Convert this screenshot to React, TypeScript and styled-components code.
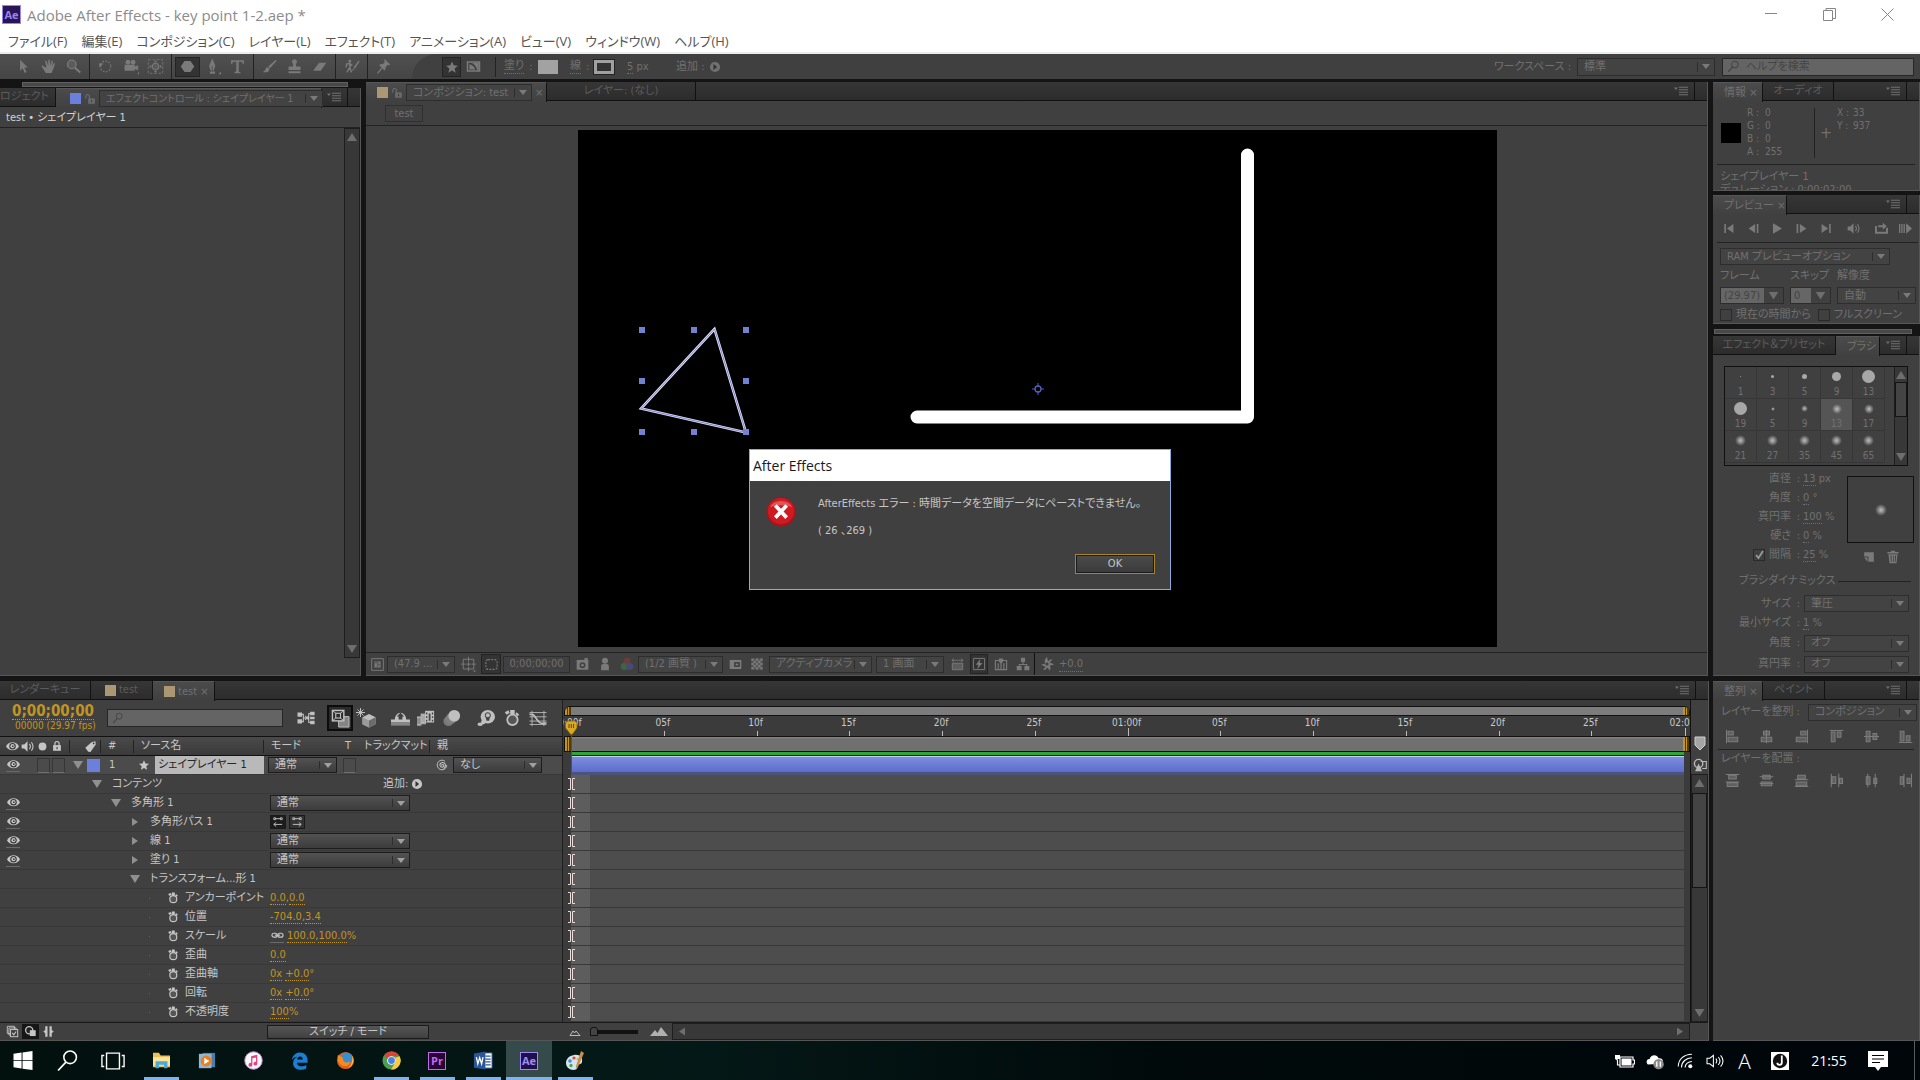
import React from "react";
import styled, { createGlobalStyle, css } from "styled-components";

const c = {
  gap: "#141414",
  panel: "#404040",
  strip: "#313131",
  edge: "#565656",
  line: "#222222",
  dim: "#707070",
  dimIcon: "#7a7a7a",
  text: "#c6c6c6",
  amber: "#c29422",
  blue: "#6b80dc",
  tan: "#ab9873",
};

const Global = createGlobalStyle`
  *, *::before, *::after { box-sizing: border-box; }
  html, body { margin: 0; height: 100%; background: ${c.gap}; }
  body {
    font-family: "DejaVu Sans Condensed", "Noto Sans CJK JP", sans-serif;
    font-feature-settings: "palt";
    font-size: 11px;
    line-height: 14px;
    color: ${c.dim};
    white-space: nowrap;
    overflow: hidden;
  }
  button, input, select {
    font: inherit;
    font-feature-settings: inherit;
    color: inherit;
    margin: 0;
    padding: 0;
    border: 0;
    border-radius: 0;
    background: none;
    appearance: none;
    outline: none;
  }
  svg { display: block; flex: none; }
`;

/* ---------- icons ---------- */

type IconProps = { w?: number; h?: number; box?: string; children: React.ReactNode };
const Svg = ({ w = 20, h = w, box = "0 0 20 20", children }: IconProps) => (
  <svg width={w} height={h} viewBox={box} fill="currentColor" stroke="none" aria-hidden="true">
    {children}
  </svg>
);
const ln = (d: string, width = 1.4) => (
  <path d={d} fill="none" stroke="currentColor" strokeWidth={width} />
);

const icons: Record<string, React.ReactNode> = {
  arrow: <path d="M6 2v13l3-3 2.500 5.500 2-1-2.500-5.300h4z" />,
  hand: <path d="M5.500 11 3 8.500 1.800 9.600l5 7.900h6.800l2.600-6 1.600-5-1.400-.5-2 4 .8-6.500L13.700 3l-1.500 6L11.500 2h-1.700l-.2 7-2-6-1.500.5L7.500 11z" />,
  zoom: (
    <>
      <circle cx="8" cy="7.500" r="5" fillOpacity=".35" stroke="currentColor" strokeWidth="1.500" />
      {ln("M11.500 11.500 18 17", 2.400)}
    </>
  ),
  rotate: (
    <>
      <circle cx="10" cy="10" r="6.300" fill="none" stroke="currentColor" strokeWidth="1.300" strokeDasharray="1.800 1.800" />
      <path d="M2 6.500h5.500L3.500 11z" />
    </>
  ),
  camera: (
    <>
      <circle cx="7" cy="5" r="2.800" />
      <circle cx="13" cy="5" r="2.800" />
      <path d="M3 8h12v7H3zM15 10l4-1.500v6L15 13zM18 19l2-3v3z" />
    </>
  ),
  panbehind: (
    <>
      <rect x="1.500" y="2" width="17" height="16" fill="none" stroke="currentColor" strokeDasharray="3 2" />
      <circle cx="10" cy="10" r="3.800" fillOpacity=".35" stroke="currentColor" strokeWidth="1.300" />
      <path d="M10 2.500 8 5h4zM10 17.500l-2-2.500h4zM2.500 10 5 8v4zM17.500 10 15 8v4z" />
    </>
  ),
  hexagon: <path d="M6.500 3.500h7l4.500 6.500-4.500 6.500h-7L2 10z" />,
  pen: <path d="M9.500 1 6 9.500 8 15h1.200V9h.9v6h1.200l2-5.500L10 1zM7 16h6v2.500H7zM17 19l3-3v3z" />,
  type: <path d="M2.500 2.500h15V7h-1.200c-.4-2-1-2.700-3-2.700H11.400V15.300c0 1 .6 1.300 2.200 1.500V18H6.400v-1.200c1.600-.2 2.200-.5 2.200-1.500V4.300H6.700c-2 0-2.600.7-3 2.700H2.500z" />,
  brush: <path d="M17.500 2 8.500 10l2 2L18.500 3.200zM8 10.800c-2 0-2.500 1.500-3 3-.4 1.200-1.500 2-3 2.700 3.500 1 7.500.2 8-3.700z" />,
  stamp: <path d="M10 1.500a3 3 0 0 1 1.600 5.500L11.800 10H17v4H3v-4h5.200L8.400 7A3 3 0 0 1 10 1.500zM3 15.500h14V18H3z" />,
  eraser: <path d="M9.500 5.500h8.500L11.500 15H2.500zM6.500 10.500h8l-3 4.500H3.500z" />,
  roto: (
    <>
      <circle cx="8" cy="3.500" r="1.800" />
      {ln("M8 5v6l-3.500 6M8 11l2 6M3.500 11l1-4 3.500-.5 3 2.500", 1.700)}
      <path d="m18.500 3-6 8 1.500 1.500L19.500 4zM12 12l-1.500 3.500 3-2z" />
    </>
  ),
  pin: (
    <>
      <path d="m11.500 1.500 6.500 6-1.500 1-1.500-.7-2.600 3c.2 1.700-.2 3-1.400 4L5 8.500c1-1.200 2.400-1.500 4-1.200l2.800-3L10.500 3z" />
      {ln("M8 12 3 18", 1.500)}
    </>
  ),
  star: <path d="m10 2 2.400 5.600 6 .5-4.600 4 1.400 6L10 14.900l-5.200 3.200 1.400-6-4.600-4 6-.5z" />,
  mask: (
    <>
      <path d="M1 3h18v14H1zm2 2v10h14V5z" fillRule="evenodd" />
      <path d="M7 5h10v10h-2C14 10 11 6 7 5zM4.500 7c4 1 7 4 8 7h-8z" />
    </>
  ),
  play: (
    <>
      <circle cx="10" cy="10" r="8.500" />
      <path d="M7.500 5v10l6-5z" fill="#333" />
    </>
  ),
  lock: (
    <>
      <path d="M7 9h11v9H7z" fillOpacity=".9" />
      {ln("M9 9V5.500a3 3 0 0 0-6 0V9", 1.700)}
      <path d="M12 11.500h1.500v4H12z" fill="#333" />
    </>
  ),
  locked: (
    <>
      <path d="M3.500 8.500h13V18h-13z" />
      {ln("M6.500 9V6a3.500 3.500 0 0 1 7 0v3", 2)}
      <path d="M9.200 11.500h1.700v4H9.200z" fill="#333" />
    </>
  ),
  menu: <path d="M0 5h5.500L2.700 8.500zM7 4h13v1.500H7zM7 7.500h13V9H7zM7 11h13v1.500H7zM7 14.500h13V16H7z" />,
  eye: (
    <>
      <path d="M0 10C4 1.500 16 1.500 20 10 16 17.500 4 17.500 0 10z" />
      <circle cx="10" cy="9.500" r="5" fill="#3a3a3a" />
      <circle cx="10" cy="9.500" r="3.200" />
      <circle cx="10.500" cy="9.500" r="1.300" fill="#3a3a3a" />
    </>
  ),
  speaker: (
    <>
      <path d="M1 7h4l5-5v16l-5-5H1z" />
      {ln("M13 6q3 4 0 8M16 3.500q5 6.500 0 13", 1.700)}
    </>
  ),
  dot: <circle cx="10" cy="10" r="6" />,
  tag: (
    <>
      <path d="M2 12 11.500 3.500l6-1.500.5 5-8 11.500-3.500-.5z" />
      <circle cx="14.800" cy="5.200" r="1.300" fill="#333" />
    </>
  ),
  swirl: (
    <>
      <circle cx="10" cy="10" r="8" fill="none" stroke="currentColor" strokeWidth="1.500" strokeDasharray="42 9" />
      {ln("M10 11c-1.500-2 2-3 3 0 .5 3-6 4-6.500-.5C6.500 5 14 4 15.500 9c1 4-1 6-3 7", 1.700)}
    </>
  ),
  watch: (
    <>
      <circle cx="10.500" cy="12" r="5.800" fill="#555" stroke="currentColor" strokeWidth="2" />
      <path d="M8 1h5v4.500H8zM2 3.500 6 1.500 7.500 4.500 4 6.500zM15 3.500l3 2.500-1.500 2-2.800-2.500z" />
    </>
  ),
  link: (
    <>
      <rect x="1.500" y="6.500" width="8" height="6" rx="3" fill="none" stroke="currentColor" strokeWidth="1.800" />
      <rect x="10.500" y="6.500" width="8" height="6" rx="3" fill="none" stroke="currentColor" strokeWidth="1.800" />
      {ln("M6 9.500h8", 1.800)}
    </>
  ),
  dirLeft: ln("M3 3h3v3H3zM14 3h3v3h-3zM6 4.500h8M3 14h14M7 10.500 3 14l4 3.500", 1.600),
  dirRight: ln("M3 3h3v3H3zM14 3h3v3h-3zM6 4.500h8M3 14h14M13 10.500l4 3.500-4 3.500", 1.600),
  flow: (
    <>
      <path d="M0 4h5v4.500H0zM0 11.500h5V16H0zM14 3h5v4h-5zM14 8.500h5v3h-5zM14 13h5v4h-5z" />
      <path d="M8.500 7.500 12.500 12M12.500 7.500 8.500 12M5 6h1.500v8H5M14 5h-1.500v10H14M6.500 10h6" fill="none" stroke="currentColor" strokeWidth="1.200" />
    </>
  ),
  comp: (
    <>
      <path d="M8 8h11v11H8z" fillOpacity=".6" stroke="currentColor" />
      <rect x="1.500" y="1.500" width="12" height="11" fill="#2b2b2b" stroke="currentColor" strokeWidth="1.500" />
      <rect x="5" y="4.500" width="5" height="5" fill="none" stroke="currentColor" strokeWidth="1.200" />
      {ln("M2 2l3 2.500M13 2l-3 2.500M2 12l3-2.500M13 12l-3-2.500", 1)}
    </>
  ),
  cube: (
    <>
      {ln("M4.500 0v9M0 4.500h9M1.500 1.500l6 6M7.500 1.500l-6 6", 1)}
      <path d="m13 6 6.500 3.200v7L13 19.500 6.500 16.200v-7z" />
      <path d="m13 12.500 6.500-3.300v7L13 19.500z" fill="#6c6c6c" />
      <path d="m6.500 9.200 6.500 3.300v7l-6.500-3.300z" fill="#9a9a9a" />
    </>
  ),
  shy: (
    <>
      <path d="M4 11a6 7 0 0 1 12 0h-4V8h2l-4-4-4 4h2v3zM0 11h20v3H0z" />
      <path d="M0 14h20v3.500H0z" fillOpacity=".55" />
    </>
  ),
  film: (
    <>
      <path d="M0 8h5v11H0z" fillOpacity=".6" />
      <path d="M4 5h6v12H4z" fillOpacity=".8" />
      <path d="M9 2h10v13H9z" />
      {ln("M0 9.500h4M0 17h4M5 7h3M5 15h3", 1)}
      <path d="M10 4h1.500v2H10zM10 8h1.500v2H10zM10 12h1.500v2H10zM16.500 4H18v2h-1.500zM16.500 8H18v2h-1.500zM16.500 12H18v2h-1.500zM13 5h2v8h-2z" fill="#444" />
    </>
  ),
  blur: (
    <>
      <circle cx="6" cy="13.500" r="5.500" fillOpacity=".45" />
      <circle cx="9" cy="10.500" r="6" fill="#808080" />
      <circle cx="12.500" cy="7.500" r="6.500" />
    </>
  ),
  brain: (
    <>
      <ellipse cx="12" cy="8.500" rx="8" ry="7.500" />
      <ellipse cx="3.500" cy="17" rx="3" ry="2" />
      <circle cx="7" cy="14.500" r="2.500" />
      <path d="M12 3.500a3.600 3.600 0 0 1 2.200 6.300L13.500 13h-3L9.800 9.800A3.600 3.600 0 0 1 12 3.500z" fill="#444" />
      <circle cx="12" cy="7" r="2.200" />
    </>
  ),
  graph: (
    <>
      {ln("M0 3h20M0 8h20M0 13h20M0 17h20M3 1v18M17 1v18", 1)}
      {ln("M0 5c4 0 5 0 8 5s5 7 12 5", 1.800)}
    </>
  ),
  collapse: (
    <>
      {ln("M2 2h11v11H2zM4.500 4.500h11v11h-11z", 1.400)}
      <rect x="7" y="7" width="11" height="11" fill="#404040" stroke="currentColor" strokeWidth="1.500" />
      {ln("M9.500 12l2.500 3 3.500-5", 1.700)}
    </>
  ),
  circles: (
    <>
      <path d="M9 8h9v9H9z" />
      <circle cx="8" cy="8" r="5.500" fill="#222" stroke="currentColor" strokeWidth="2" />
      <path d="M9 8h5v5H9z" />
    </>
  ),
  braces: <path d="M8.500 2H5v5.500L2 10l3 2.500V18h3.500zM11.500 2H15v5.500l3 2.500-3 2.500V18h-3.500z" />,
  search: (
    <>
      <circle cx="12" cy="7" r="5" fill="none" stroke="currentColor" strokeWidth="1.600" />
      {ln("M8.500 11 2 18", 2)}
    </>
  ),
  first: <path d="M2 3h2.500v14H2zM16 3v14l-10-7z" />,
  prev: <path d="M15 3h2.500v14H15zM12.500 3v14l-10-7z" />,
  go: <path d="M3 2v16l14-8z" />,
  next: <path d="M2.500 3H5v14H2.500zM7.500 3v14l10-7z" />,
  last: <path d="M15.500 3H18v14h-2.500zM4 3v14l10-7z" />,
  loop: <path d="M0 6h3v9h14V9h3v9H0zM5 5h7V1l6 5.500L12 12V8H5z" />,
  ram: <path d="M0 3h2v14H0zM3.500 3h2v14h-2zM7 3h2v14H7zM11 2v16l9-8z" />,
  note: <path d="M2 2h16v16h-9V9H2zM2 11h5.500v7z" />,
  trash: <path d="M7 1h6v2h5v2H2V3h5zM3.500 6h13L15 19H5zm3 2 .5 9h1V8zM10 8v9h1V8zm3 0-.5 9h1L14.500 8z" />,
  grid: (
    <>
      {ln("M1 1h18v18H1z", 1.500)}
      <path d="M4.500 4.500h11v11h-11z" fillOpacity=".45" />
      <path d="M11 6h3v3h-3zM6 8h3v6H6zM11 11h3v3h-3z" />
    </>
  ),
  safe: (
    <>
      {ln("M3 3h14v13H3zM10 0v6M10 13v6M0 9.500h6M14 9.500h6M7 9.500h6M10 7v5", 1.300)}
      <path d="M16 18h4l-2 2.500z" />
    </>
  ),
  roi: <rect x="2.500" y="3.500" width="15" height="13" rx="3" fill="none" stroke="currentColor" strokeWidth="1.500" strokeDasharray="2.500 1.700" />,
  photo: (
    <>
      <path d="M1 3h18v15H1z" />
      <circle cx="10" cy="11" r="4.500" fill="#404040" />
      <circle cx="10" cy="11" r="2" />
      <path d="M13 0h5v3h-5z" />
    </>
  ),
  person: <path d="M10 1a4 4 0 0 1 0 8.500A4 4 0 0 1 10 1zM4.500 19v-6q0-3 3-3h5q3 0 3 3v6z" />,
  rgb: (
    <>
      <circle cx="10" cy="6" r="5" fill="#6e3b3d" />
      <circle cx="6" cy="13.500" r="5" fill="#3c6543" />
      <circle cx="14" cy="13.500" r="5" fill="#454a78" />
    </>
  ),
  res: (
    <>
      <path d="M1 3h18v14H1z" />
      <path d="M8 6.500h8.500v7H8z" fill="#333" />
      <path d="M10 8.500h4.500v3H10z" />
    </>
  ),
  checker: (
    <>
      <path d="M2 2h16v16H2z" fillOpacity=".4" />
      <path d="M2 2h3.200v3.200H2zm6.400 0h3.200v3.200H8.400zm6.400 0H18v3.200h-3.200zM5.200 5.200h3.200v3.200H5.200zm6.400 0h3.200v3.200h-3.200zM2 8.400h3.200v3.200H2zm6.400 0h3.200v3.200H8.400zm6.400 0H18v3.200h-3.200zM5.200 11.600h3.200v3.200H5.200zm6.400 0h3.200v3.200h-3.200zM2 14.800h3.200V18H2zm6.400 0h3.200V18H8.400zm6.400 0H18V18h-3.200z" />
    </>
  ),
  ratio: (
    <>
      <path d="M2 8h16v10H2z" fillOpacity=".5" stroke="currentColor" strokeWidth="1.500" />
      {ln("M1 3.500h18M4.500 1 1.500 3.500l3 2.500M15.500 1l3 2.500-3 2.500", 1.300)}
    </>
  ),
  bolt: (
    <>
      {ln("M2 2h16v16H2z", 1.400)}
      <path d="M12 2.500 5.500 11H9l-1.500 6.500L15 8.500h-4z" />
    </>
  ),
  tline: (
    <>
      {ln("M2 5h16v13H2zM6 9v9M10 9v9M14 9v9", 1.600)}
      <path d="M7 2h6v4l-3 4-3-4z" />
    </>
  ),
  tree: <path d="M7 1h6v6H7zM1 13h7v6H1zM12 13h7v6h-7zM9.300 7h1.400v3H16v3h-1.400v-1.700H5.400V13H4v-3h5.300z" />,
  aperture: (
    <>
      <path d="M10 0c1 3 0 4 2 6 2-3 4-3 6-2-3 1-3 3-4 5 3-1 5 1 6 3-3-1-4 0-6 1 2 2 1 5-1 7 0-3-1-4-3-5-1 3-3 4-6 3 3-1 3-3 4-5-3 1-5-1-6-3 3 1 4 0 6-1-2-2-2-5 2-9z" />
      <circle cx="10" cy="10" r="2.300" fill="#404040" />
    </>
  ),
  layers: (
    <>
      <circle cx="8" cy="8" r="6" fill="none" stroke="currentColor" strokeWidth="2" />
      {ln("M11 5h8v10h-6", 1.600)}
      <path d="m8 8 5 11H3z" />
    </>
  ),
};
const Icon = ({ name, size = 20, h }: { name: string; size?: number; h?: number }) => (
  <Svg w={size} h={h ?? size}>{icons[name]}</Svg>
);

/* ---------- shared parts ---------- */

const Grip = styled.span`
  flex: none;
  width: 4px;
  height: 14px;
  background-image: radial-gradient(circle, #5c5c5c 40%, transparent 50%);
  background-size: 2px 2px;
`;

const Panel = styled.section`
  display: flex;
  flex-direction: column;
  min-width: 0;
  min-height: 0;
  background: ${c.panel};
  border-right: 1px solid ${c.edge};
  border-bottom: 1px solid ${c.edge};
  overflow: hidden;
`;

const TabStrip = styled.div`
  display: flex;
  flex: none;
  height: 19px;
  background: linear-gradient(#363636, #2c2c2c);
  border-bottom: 1px solid #111;
`;

const Tab = styled.div<{ $active?: boolean; $w?: number }>`
  display: flex;
  flex: none;
  align-items: center;
  justify-content: ${(p) => (p.$active ? "flex-start" : "center")};
  gap: 3px;
  width: ${(p) => (p.$w ? `${p.$w}px` : "auto")};
  padding: ${(p) => (p.$active ? "0 0 0 4px" : "0")};
  color: ${(p) => (p.$active ? c.dim : "#5c5c5c")};
  border-right: 1px solid #111;
  ${(p) =>
    p.$active &&
    css`
      height: 20px;
      background: linear-gradient(#4b4b4b, ${c.panel});
      border-top: 1px solid ${c.edge};
    `}
`;

const ClippedTab = styled(Tab)`
  justify-content: flex-start;
`;

const StripEnd = styled.div`
  display: flex;
  align-items: center;
  gap: 6px;
  margin-left: auto;
  padding-right: 2px;
  color: ${c.dim};
`;
const StripDivider = styled.span`
  width: 1px;
  height: 100%;
  background: #111;
`;
const PanelMenu = () => (
  <StripEnd>
    <Icon name="menu" size={14} />
    <StripDivider />
    <Grip />
  </StripEnd>
);

const Swatch = styled.span<{ $color: string; $w?: number; $h?: number }>`
  flex: none;
  width: ${(p) => p.$w ?? 11}px;
  height: ${(p) => p.$h ?? 11}px;
  background: ${(p) => p.$color};
`;

const SelectWrap = styled.span<{ $w?: number; $h?: number; $live?: boolean; $small?: boolean }>`
  position: relative;
  display: flex;
  flex: none;
  width: ${(p) => (p.$w ? `${p.$w}px` : "auto")};
  height: ${(p) => p.$h ?? 17}px;
  border: 1px solid ${(p) => (p.$live ? "#1c1c1c" : "#2d2d2d")};
  background: ${(p) => (p.$live ? "linear-gradient(#525252, #3c3c3c)" : "#434343")};
  color: ${(p) => (p.$live ? c.text : c.dim)};
  font-size: ${(p) => (p.$small ? 10 : 11)}px;
  &::before {
    content: "";
    position: absolute;
    top: 3px;
    bottom: 3px;
    right: 16px;
    width: 1px;
    background: #2d2d2d;
  }
  &::after {
    content: "";
    position: absolute;
    top: 5px;
    right: 4px;
    border: 4px solid transparent;
    border-top: 5px solid ${(p) => (p.$live ? "#a0a0a0" : "#7a7a7a")};
    border-bottom: 0;
  }
  select {
    flex: 1;
    min-width: 0;
    padding: 0 17px 0 6px;
  }
`;
type SelectProps = { label: string; value: string; w?: number; h?: number; live?: boolean; small?: boolean };
const Select = ({ label, value, w, h, live, small }: SelectProps) => (
  <SelectWrap $w={w} $h={h} $live={live} $small={small}>
    <select aria-label={label} defaultValue={value}>
      <option>{value}</option>
    </select>
  </SelectWrap>
);

const IconButton = styled.button<{ $w?: number; $pressed?: boolean }>`
  display: flex;
  flex: none;
  align-items: center;
  justify-content: center;
  width: ${(p) => p.$w ?? 22}px;
  color: ${c.dimIcon};
  ${(p) =>
    p.$pressed &&
    css`
      align-self: center;
      height: 20px;
      background: #333;
      border: 1px solid #242424;
    `}
`;

const Rule = styled.div`
  flex: none;
  height: 1px;
  background: ${c.line};
`;

const Dotted = styled.span`
  border-bottom: 1px dotted currentColor;
`;

/* ---------- title and menus ---------- */

const Page = styled.div`
  display: flex;
  flex-direction: column;
  height: 100vh;
`;

const TitleBar = styled.header`
  display: flex;
  flex: none;
  align-items: center;
  gap: 6px;
  height: 29px;
  padding: 0 4px 0 2px;
  background: #fff;
  color: #8c8c8c;
  font: 15px/20px "Open Sans", "Noto Sans", sans-serif;
`;
const AppBadge = styled.span<{ $size: number; $color: string; $bg: string }>`
  display: flex;
  align-items: center;
  justify-content: center;
  width: ${(p) => p.$size}px;
  height: ${(p) => p.$size}px;
  background: ${(p) => p.$bg};
  border: 1px solid ${(p) => p.$color};
  color: ${(p) => p.$color};
  font: bold 11px/12px "Open Sans", sans-serif;
`;
const WindowButtons = styled.div`
  display: flex;
  margin-left: auto;
  color: #868686;
`;
const WindowButton = styled.button`
  display: flex;
  justify-content: center;
  width: 58px;
`;
const MenuBar = styled.nav`
  display: flex;
  flex: none;
  align-items: center;
  gap: 14px;
  height: 25px;
  padding: 0 8px;
  background: #fff;
  border-bottom: 2px solid #ececec;
  color: #555;
  font: 13px/20px "Open Sans", "Noto Sans CJK JP", sans-serif;
  font-feature-settings: "palt";
`;
const MenuButton = styled.button``;

/* ---------- toolbar ---------- */

const Toolbar = styled.div`
  display: flex;
  flex: none;
  height: 25px;
  background: linear-gradient(#505050, #454545);
  color: ${c.dim};
`;
const ToolGrip = styled.div`
  display: flex;
  align-items: center;
  width: 8px;
  padding-left: 4px;
`;
const ToolGroup = styled.div<{ $last?: boolean }>`
  display: flex;
  padding: 0 3px;
  border-right: 1px solid ${(p) => (p.$last ? "transparent" : "#222")};
`;
const ToolOptions = styled.div`
  display: flex;
  flex: 1;
  align-items: center;
  margin-left: 12px;
  padding: 0 6px 0 30px;
  border-top-left-radius: 24px 25px;
  background: ${c.panel};
`;
const ToolDivider = styled.span`
  width: 1px;
  height: 20px;
  margin: 0 8px 0 10px;
  background: #222;
`;
const Option = styled.span<{ $w: number }>`
  display: flex;
  flex: none;
  align-items: center;
  gap: 5px;
  width: ${(p) => p.$w}px;
`;
const StrokeSwatch = styled.span`
  width: 20px;
  height: 14px;
  border: 3px solid #a0a0a0;
  outline: 1px solid #222;
  background: #333;
`;
const Workspace = styled.label`
  display: flex;
  align-items: center;
  gap: 6px;
  margin-left: auto;
  margin-right: 7px;
`;
const SearchBox = styled.label<{ $w: number; $h: number }>`
  display: flex;
  flex: none;
  align-items: center;
  gap: 6px;
  width: ${(p) => p.$w}px;
  height: ${(p) => p.$h}px;
  padding-left: 4px;
  background: #646464;
  border: 1px solid #262626;
  color: #454545;
  input {
    flex: 1;
    min-width: 0;
  }
  input::placeholder {
    color: #454545;
    opacity: 1;
  }
`;

/* ---------- upper workspace ---------- */

const Upper = styled.main`
  display: grid;
  flex: 1;
  grid-template-columns: 361px minmax(0, 1fr) 207px;
  column-gap: 5px;
  min-height: 0;
  padding: 3px 0 5px;
`;
const Column = styled.div`
  display: flex;
  flex-direction: column;
  min-height: 0;
  min-width: 0;
`;
const DockBar = styled.div<{ $left?: boolean }>`
  flex: none;
  height: 5px;
  margin: ${(p) => (p.$left ? "0 13px 1px 22px" : "5px 8px 2px 1px")};
  background: #484848;
  border: 1px solid #606060;
`;
const EffectPanel = styled(Panel)`
  flex: 1;
`;
const EffectTitle = styled.div`
  flex: none;
  height: 21px;
  padding: 4px 6px 3px;
  border-bottom: 1px solid ${c.line};
  color: #d2d2d2;
`;
const EffectBody = styled.div`
  display: flex;
  flex: 1;
  justify-content: flex-end;
  padding-bottom: 17px;
`;
const ScrollTrack = styled.div<{ $w?: number }>`
  display: flex;
  flex: none;
  flex-direction: column;
  align-items: center;
  width: ${(p) => p.$w ?? 16}px;
  padding: 4px 0;
  background: #383838;
  border: 1px solid #1e1e1e;
`;
const Tri = styled.span<{ $dir: "up" | "down" | "left" | "right"; $end?: boolean }>`
  flex: none;
  width: 10px;
  height: 8px;
  margin-top: ${(p) => (p.$end ? "auto" : "0")};
  background: #6e6e6e;
  clip-path: ${(p) =>
    ({
      up: "polygon(50% 0, 100% 100%, 0 100%)",
      down: "polygon(0 0, 100% 0, 50% 100%)",
      left: "polygon(20% 50%, 80% 0, 80% 100%)",
      right: "polygon(20% 0, 80% 50%, 20% 100%)",
    })[p.$dir]};
`;
const Crumbs = styled.div`
  flex: none;
  height: 25px;
  padding: 4px 19px;
  border-bottom: 1px solid ${c.line};
`;
const Crumb = styled.button`
  width: 38px;
  height: 17px;
  border: 1px solid #303030;
`;
const Viewer = styled.div`
  flex: 1;
  min-height: 0;
  padding: 4px 0 5px 2px;
  svg {
    width: 100%;
    height: 100%;
  }
`;
const ViewerBar = styled.div`
  display: flex;
  flex: none;
  align-items: center;
  height: 23px;
  padding-left: 4px;
  gap: 2px;
  border-top: 1px solid ${c.line};
`;
const TimeBox = styled.button`
  width: 67px;
  height: 17px;
  border: 1px solid #2d2d2d;
`;

/* ---------- right column ---------- */

const InfoPanel = styled(Panel)`
  flex: none;
  height: 109px;
  margin-bottom: 4px;
`;
const PreviewPanel = styled(Panel)`
  flex: none;
  height: 129px;
`;
const BrushPanel = styled(Panel)`
  flex: 1;
`;
const InfoGrid = styled.div`
  display: flex;
  flex: none;
  height: 64px;
  padding: 5px 8px;
  margin: 0 4px;
  border-bottom: 1px solid ${c.line};
  font-size: 10px;
  line-height: 13px;
`;
const InfoSwatch = styled(Swatch)`
  align-self: center;
  margin: 0 6px 0 -4px;
`;
const Channels = styled.dl`
  display: grid;
  grid-template-columns: 18px auto;
  align-content: start;
  width: 67px;
  margin: 0;
  dd {
    margin: 0;
  }
`;
const CursorPos = styled(Channels)`
  grid-template-columns: 16px auto;
`;
const Plus = styled.span`
  align-self: center;
  width: 23px;
  padding-left: 5px;
  border-left: 1px solid ${c.line};
  font-size: 16px;
  line-height: 50px;
`;
const InfoNotes = styled.div`
  padding: 5px 7px 0;
  line-height: 13px;
`;
const PlayRow = styled.div`
  display: flex;
  flex: none;
  height: 29px;
  margin: 0 1px 0 4px;
  border-bottom: 1px solid ${c.line};
`;
const PreviewGrid = styled.div`
  display: grid;
  grid-template-columns: 64px 41px 79px;
  column-gap: 6px;
  row-gap: 4px;
  padding: 5px 0 0 7px;
`;
const Wide = styled.div`
  grid-column: 1 / -1;
`;
const Combo = styled.label`
  display: grid;
  grid-template-columns: 1fr 19px;
  align-items: center;
  justify-items: center;
  height: 17px;
  border: 1px solid #2d2d2d;
  input {
    width: 100%;
    height: 15px;
    padding-left: 3px;
    background: #666;
    color: #444;
  }
`;
const CheckRow = styled.div`
  display: flex;
  grid-column: 1 / -1;
  gap: 7px;
`;
const Check = styled.label`
  display: flex;
  align-items: center;
  gap: 4px;
  input {
    width: 12px;
    height: 12px;
    border: 1px solid #2a2a2a;
  }
  input:checked {
    background: url("data:image/svg+xml,%3Csvg xmlns='http://www.w3.org/2000/svg' viewBox='0 0 10 10'%3E%3Cpath d='M2 5l2.500 3L9 1' fill='none' stroke='%23999' stroke-width='1.800'/%3E%3C/svg%3E") center / 10px;
  }
`;
const BrushList = styled.div`
  display: flex;
  flex: none;
  height: 100px;
  margin: 11px 11px 3px;
  border: 1px solid #101010;
`;
const BrushGrid = styled.div`
  display: grid;
  flex: 1;
  grid-template-columns: repeat(5, 32px);
  grid-auto-rows: 32px;
  overflow: hidden;
  font-size: 10px;
  line-height: 12px;
`;
const BrushCell = styled.button<{ $on?: boolean }>`
  display: grid;
  grid-template-rows: 19px 12px;
  justify-items: center;
  align-items: center;
  border-right: 1px solid #373737;
  border-bottom: 1px solid #373737;
  background: ${(p) => (p.$on ? "#555" : "none")};
`;
const BrushDot = styled.span<{ $d: number; $soft?: boolean }>`
  width: ${(p) => p.$d}px;
  height: ${(p) => p.$d}px;
  border-radius: 50%;
  background: ${(p) => (p.$soft ? "radial-gradient(circle, #b0b0b0 10%, transparent 70%)" : "#a8a8a8")};
`;
const BrushThumb = styled.span`
  width: 100%;
  height: 35px;
  margin-top: 3px;
  background: #444;
  border: 1px solid #141414;
`;
const BrushScroll = styled(ScrollTrack)`
  width: 13px;
  border-width: 0 0 0 1px;
`;
const BrushSettings = styled.div`
  display: grid;
  grid-template-columns: 1fr 67px;
  margin: 0 5px 5px 0;
`;
const Fields = styled.div`
  display: grid;
  grid-auto-rows: 19px;
  align-items: center;
`;
const Field = styled.div`
  display: grid;
  grid-template-columns: 78px 9px 1fr;
  align-items: center;
  height: 19px;
  text-align: right;
  > :nth-child(3) {
    text-align: left;
    padding-left: 3px;
  }
  > label {
    justify-content: flex-end;
  }
`;
const SelectField = styled(Field)`
  height: 22px;
  margin-right: 10px;
  > :nth-child(3) {
    margin-left: 4px;
    padding: 0;
  }
`;
const BrushPreview = styled.div`
  display: flex;
  align-items: center;
  justify-content: center;
  height: 67px;
  margin-top: 7px;
  border: 1px solid #101010;
`;
const BrushActions = styled.div`
  display: flex;
  justify-content: center;
  padding-top: 7px;
`;
const SectionLabel = styled.div`
  display: flex;
  flex: none;
  align-items: center;
  gap: 3px;
  height: 24px;
  padding: 0 8px 0 26px;
  &::after {
    content: "";
    flex: 1;
    height: 1px;
    background: ${c.line};
  }
`;
const AlignTop = styled.label`
  display: flex;
  align-items: center;
  justify-content: space-between;
  height: 24px;
  padding: 0 2px 0 8px;
`;
const AlignLabel = styled.div`
  height: 18px;
  padding: 2px 8px;
`;
const AlignRow = styled.div`
  display: flex;
  justify-content: space-between;
  height: 25px;
  padding: 0 2px 0 8px;
`;
const AlignRule = styled(Rule)`
  margin: 0 5px;
`;

/* ---------- timeline ---------- */

const Lower = styled.div`
  display: grid;
  flex: none;
  grid-template-columns: minmax(0, 1fr) 207px;
  column-gap: 4px;
`;
const TimelineBody = styled.div`
  display: grid;
  grid-template-columns: 563px minmax(0, 1fr) 18px;
`;
const Outline = styled.div`
  border-right: 1px solid #1e1e1e;
  color: ${c.text};
`;
const OutlineTop = styled.div`
  display: flex;
  align-items: center;
  height: 37px;
  padding-left: 12px;
  border-bottom: 1px solid #111;
`;
const TimeCode = styled.button`
  width: 95px;
  text-align: left;
  color: ${c.amber};
  font-size: 10px;
  line-height: 12px;
  strong {
    display: inline-block;
    font-size: 15px;
    line-height: 15px;
    border-bottom: 1px dotted ${c.amber};
  }
  span {
    display: block;
    padding-left: 3px;
  }
`;
const SwitchIcons = styled.div`
  display: flex;
  align-items: center;
  padding-left: 10px;
`;
const SwitchButton = styled.button<{ $ml?: boolean; $pressed?: boolean }>`
  display: flex;
  align-items: center;
  justify-content: center;
  width: 26px;
  height: 26px;
  margin-left: ${(p) => (p.$ml ? "8px" : "0")};
  color: #c0c0c0;
  ${(p) => p.$pressed && "background: #2b2b2b; border: 2px solid #0c0c0c;"}
`;
const columns = "70px 31px 33px 130px 74px 19px 73px 1fr";
const ColumnHeads = styled.div`
  display: grid;
  grid-template-columns: ${columns};
  align-items: center;
  height: 19px;
  background: linear-gradient(#4a4a4a, #3a3a3a);
  border-bottom: 1px solid #111;
`;
const Head = styled.div<{ $line?: boolean; $pad?: number }>`
  display: flex;
  align-items: center;
  gap: 2px;
  height: 13px;
  padding-left: ${(p) => p.$pad ?? 7}px;
  border-right: 1px solid ${(p) => (p.$line ? "#222" : "transparent")};
`;
const Row = styled.div<{ $layer?: boolean }>`
  display: grid;
  grid-template-columns: 70px 198px 1fr;
  align-items: center;
  height: 19px;
  background: ${(p) => (p.$layer ? "#4b4b4b" : c.panel)};
  border-bottom: 1px solid #383838;
`;
const RowSwitches = styled.div`
  display: flex;
  align-items: center;
  gap: 2px;
  padding-left: 6px;
`;
const EyeBox = styled.button`
  display: flex;
  justify-content: center;
  width: 14px;
  border-bottom: 1px solid #6a6a6a;
  color: ${c.text};
`;
const EmptyBox = styled.button<{ $gap?: boolean }>`
  width: 13px;
  height: 15px;
  margin-left: ${(p) => (p.$gap ? "15px" : "0")};
  border: 1px solid #363636;
  border-bottom-color: #6e6e6e;
`;
const RowName = styled.div<{ $depth: number }>`
  display: flex;
  align-items: center;
  height: 100%;
  padding-left: ${(p) => p.$depth * 19 + 3}px;
`;
const Twirl = styled(Tri)`
  background: #909090;
  margin-right: 10px;
`;
const LayerTwirl = styled(Tri)`
  background: #909090;
  margin-right: 4px;
`;
const LayerName = styled.span`
  display: flex;
  flex: 1;
  align-items: center;
  align-self: stretch;
  margin-left: 5px;
  margin-right: 4px;
  padding-left: 3px;
  background: #b9b9b9;
  color: #262626;
`;
const LayerNumber = styled.span`
  width: 38px;
  padding-left: 9px;
`;
const StopwatchButton = styled.button`
  margin-right: 6px;
`;
const KeyDot = styled.span`
  width: 18px;
  &::before {
    content: "";
    display: block;
    width: 1px;
    height: 1px;
    background: #666;
  }
`;
const RowValue = styled.div`
  display: flex;
  align-items: center;
  gap: 3px;
  padding-left: 2px;
  color: ${c.amber};
`;
const AddCell = styled.button`
  display: flex;
  align-items: center;
  gap: 3px;
  padding-left: 115px;
`;
const LayerValue = styled.div`
  display: flex;
  align-items: center;
  gap: 6px;
`;
const ParentPick = styled.div`
  display: flex;
  align-items: center;
  gap: 5px;
  padding-left: 74px;
`;
const DirButton = styled.button<{ $on?: boolean }>`
  display: flex;
  width: 16px;
  height: 14px;
  align-items: center;
  justify-content: center;
  background: ${(p) => (p.$on ? "#1c1c1c" : "#333")};
  border: 1px solid #1a1a1a;
  color: #c0c0c0;
`;

const TimeArea = styled.div`
  position: relative;
  min-width: 0;
  overflow: hidden;
  background: #3b3b3b;
  padding: 6px 6px 0 8px;
`;
const Navigator = styled.div`
  display: flex;
  justify-content: space-between;
  height: 10px;
  margin: 0 -6px 0 -7px;
  background: #7c7c7c;
  border: 1px solid #111;
  border-radius: 6px 6px 0 0;
  overflow: hidden;
`;
const Handle = styled.span`
  width: 6px;
  height: 100%;
  background: linear-gradient(90deg, ${c.amber} 33%, #4e3b0a 33% 50%, ${c.amber} 50% 75%, #4e3b0a 75%);
`;
const Ruler = styled.div`
  display: grid;
  grid-template-columns: repeat(12, 1fr);
  height: 20px;
  color: #cacaca;
  font-size: 10px;
  line-height: 14px;
`;
const Tick = styled.span<{ $major?: boolean }>`
  position: relative;
  width: 40px;
  margin-left: -21px;
  text-align: center;
  &::after {
    content: "";
    position: absolute;
    left: 21px;
    bottom: 0;
    width: 1px;
    height: ${(p) => (p.$major ? 8 : 5)}px;
    background: #bbb;
  }
`;
const LastTick = styled(Tick)`
  position: absolute;
  right: -14px;
  height: 20px;
`;
const WorkArea = styled.div`
  display: flex;
  justify-content: space-between;
  height: 16px;
  margin: 0 -6px 0 -7px;
  border: 1px solid #111;
  background: linear-gradient(#858585, #707070 2px);
`;
const CacheLine = styled.div`
  height: 4px;
  background: #2fa537;
  border-bottom: 1px solid #1a1a1a;
`;
const Clip = styled.div`
  height: 19px;
  border-top: 1px solid #c2cdf2;
  border-bottom: 3px solid #4d527b;
  background: linear-gradient(#7d8ede, #5c6ccb);
`;
const Track = styled.div`
  position: relative;
  height: 19px;
  background: linear-gradient(90deg, #5d5d5d 19px, #4d4d4d 19px);
  border-bottom: 1px solid #393939;
`;
const InPoint = styled.span`
  position: absolute;
  left: -4px;
  top: 3px;
`;
const Playhead = styled.div`
  position: absolute;
  left: 1px;
  top: 20px;
  bottom: 0;
  width: 15px;
  &::after {
    content: "";
    position: absolute;
    left: 7px;
    top: 14px;
    bottom: 0;
    width: 1px;
    background: #b8252a;
  }
`;
const SideRail = styled.div`
  display: flex;
  flex-direction: column;
  border-left: 1px solid #111;
  color: #b8b8b8;
`;
const RailTop = styled.div`
  display: flex;
  flex-direction: column;
  align-items: center;
  gap: 7px;
  height: 74px;
  padding-top: 36px;
`;
const RailTrack = styled(ScrollTrack)`
  flex: 1;
  width: 17px;
`;
const RailThumb = styled.span`
  width: 100%;
  height: 95px;
  margin-top: 6px;
  background: #444;
  border: 1px solid #141414;
`;
const TimelineFoot = styled.div`
  display: flex;
  align-items: center;
  height: 18px;
  border-top: 1px solid #1a1a1a;
  color: ${c.text};
`;
const FootTools = styled.div`
  display: flex;
  gap: 1px;
  width: 267px;
  padding-left: 4px;
`;
const FootButton = styled.button<{ $on?: boolean }>`
  display: flex;
  align-items: center;
  justify-content: center;
  width: 17px;
  height: 15px;
  background: ${(p) => (p.$on ? "#161616" : "none")};
`;
const ModeToggle = styled.button`
  width: 162px;
  height: 14px;
  margin-right: 140px;
  border: 1px solid #1a1a1a;
  background: linear-gradient(#565656, #404040);
  line-height: 12px;
`;
const ZoomSlider = styled.input`
  width: 48px;
  height: 14px;
  margin: 0 12px 0 9px;
  background: linear-gradient(#111, #111) center / 100% 4px no-repeat;
  &::-webkit-slider-thumb {
    appearance: none;
    width: 8px;
    height: 9px;
    background: #444;
    border: 1px solid #111;
    border-radius: 3px 3px 0 0;
  }
`;
const HScroll = styled.div`
  display: flex;
  flex: 1;
  align-items: center;
  justify-content: space-between;
  height: 17px;
  margin: 0 18px 0 4px;
  padding: 0 4px;
  background: #383838;
  border: 1px solid #1e1e1e;
`;

/* ---------- dialog ---------- */

const Dialog = styled.div`
  position: absolute;
  top: 449px;
  left: 50%;
  width: 422px;
  transform: translateX(-50%);
  border: 1px solid #8aabdc;
  background: ${c.panel};
  color: ${c.text};
`;
const DialogTitle = styled.h1`
  margin: 0;
  padding: 5px 3px 5px;
  background: #fff;
  color: #1a1a1a;
  font: 14px/21px "Open Sans", "Noto Sans", sans-serif;
`;
const DialogBody = styled.div`
  display: grid;
  grid-template-columns: 52px 1fr;
  height: 73px;
  padding: 16px 16px 0;
  p {
    margin: 0 0 13px;
  }
`;
const DialogFoot = styled.div`
  display: flex;
  justify-content: flex-end;
  padding: 0 15px 15px;
`;
const OkButton = styled.button`
  width: 80px;
  height: 20px;
  border: 1px solid #ab8427;
  outline: 1px solid #1a1a1a;
  outline-offset: -2px;
  background: linear-gradient(#4c4c4c, #3a3a3a);
`;

/* ---------- taskbar ---------- */

const Taskbar = styled.footer`
  display: flex;
  flex: none;
  height: 39px;
  background: linear-gradient(90deg, #02100e, #041917 35%, #010a0b 60%, #00060a);
  color: #fff;
`;
const SystemButtons = styled.div`
  display: flex;
  width: 138px;
`;
const TaskButton = styled.button<{ $run?: boolean; $on?: boolean; $w?: number }>`
  display: flex;
  align-items: center;
  justify-content: center;
  width: ${(p) => p.$w ?? 46}px;
  background: ${(p) => (p.$on ? "#354a4a" : "none")};
  ${(p) =>
    p.$run &&
    css`
      background-image: linear-gradient(#7db4ef, #7db4ef);
      background-repeat: no-repeat;
      background-size: ${p.$on ? "100%" : "35px"} 3px;
      background-position: center bottom;
    `}
`;
const Tray = styled.div`
  display: flex;
  align-items: center;
  margin-left: auto;
  margin-right: 5px;
  padding-right: 16px;
  border-right: 1px solid #565c5e;
`;
const TrayItem = styled.button<{ $w: number }>`
  display: flex;
  justify-content: center;
  width: ${(p) => p.$w}px;
  font: 14px/20px "Open Sans", sans-serif;
`;
const Ime = styled(TrayItem)`
  font-size: 21px;
  font-weight: 300;
`;

/* ---------- data ---------- */

const menus = ["ファイル(F)", "編集(E)", "コンポジション(C)", "レイヤー(L)", "エフェクト(T)", "アニメーション(A)", "ビュー(V)", "ウィンドウ(W)", "ヘルプ(H)"];
const toolGroups = [["arrow", "hand", "zoom"], ["rotate", "camera", "panbehind"], ["hexagon", "pen", "type"], ["brush", "stamp", "eraser"], ["roto"], ["pin"]];
const transport: [string, string, number][] = [
  ["first", "最初のフレーム", 24],
  ["prev", "前のフレーム", 24],
  ["go", "再生", 24],
  ["next", "次のフレーム", 24],
  ["last", "最後のフレーム", 24],
  ["speaker", "オーディオ", 32],
  ["loop", "ループ", 24],
  ["ram", "RAM プレビュー", 24],
];
const brushes: [number, number, boolean?][] = [
  [1, 1], [3, 3], [5, 5], [9, 9], [13, 13],
  [19, 13], [5, 4, true], [9, 7, true], [13, 10, true], [17, 10, true],
  [21, 11, true], [27, 11, true], [35, 11, true], [45, 11, true], [65, 11, true],
];
const ticks = ["0:00f", "05f", "10f", "15f", "20f", "25f", "01:00f", "05f", "10f", "15f", "20f", "25f"];
const groups: { name: string; depth: number; open?: boolean; eye?: boolean; kind?: "add" | "mode" | "dir" }[] = [
  { name: "コンテンツ", depth: 1, open: true, kind: "add" },
  { name: "多角形 1", depth: 2, open: true, eye: true, kind: "mode" },
  { name: "多角形パス 1", depth: 3, eye: true, kind: "dir" },
  { name: "線 1", depth: 3, eye: true, kind: "mode" },
  { name: "塗り 1", depth: 3, eye: true, kind: "mode" },
  { name: "トランスフォーム...形 1", depth: 3, open: true },
];
const props: { name: string; values: string[]; unit?: string; linked?: boolean }[] = [
  { name: "アンカーポイント", values: ["0.0", "0.0"] },
  { name: "位置", values: ["-704.0", "3.4"] },
  { name: "スケール", values: ["100.0", "100.0"], unit: "%", linked: true },
  { name: "歪曲", values: ["0.0"] },
  { name: "歪曲軸", values: ["0x", "+0.0"], unit: "°" },
  { name: "回転", values: ["0x", "+0.0"], unit: "°" },
  { name: "不透明度", values: ["100"], unit: "%" },
];

/* Each entry is a pair of bars and the guide they line up with. */
const alignIcons = ["M2 1v18M4 3h7v5H4zM4 11h13v6H4z", "M10 1v18M6 3h8v5H6zM3 11h14v6H3z", "M18 1v18M9 3h7v5H9zM3 11h13v6H3z", "M1 2h18M3 4h5v13H3zM11 4h5v7h-5z", "M0 10h20M3 3h5v14H3zM12 6h5v8h-5z", "M1 18h18M3 3h5v13H3zM11 9h5v7h-5z"];
const spreadIcons = ["M1 2h18M5 3h10v5H5zM1 12h18M3 13h14v5H3z", "M1 5h18M5 3h10v5H5zM1 14h18M3 12h14v5H3z", "M5 3h10v5H5zM1 9h18M3 12h14v5H3zM1 18h18", "M3 1v18M4 5h5v9H4zM13 1v18M14 7h4v7h-4z", "M5 1v18M3 5h5v10H3zM15 1v18M13 7h4v7h-4z", "M3 5h4v10H3zM8 1v18M12 7h4v7h-4zM18 1v18"];

/* ---------- sections ---------- */

const Composition = () => (
  <svg viewBox="0 0 919 517" role="img" aria-label="test">
    <rect width="919" height="517" fill="#000" />
    <path d="M339 287H669.500V25" fill="none" stroke="#fff" strokeWidth="13" strokeLinecap="round" strokeLinejoin="round" />
    <path d="M136.500 199 63 278.500 168 302.500z" fill="none" stroke="#dcdcf4" strokeWidth="2.600" />
    <path d="M136.500 199 63 278.500 168 302.500z" fill="none" stroke="#8187cf" strokeWidth="1" />
    {[200, 251, 302].flatMap((y) =>
      [64, 116, 168].map((x) =>
        x === 116 && y === 251 ? null : <rect key={`${x}-${y}`} x={x - 3} y={y - 3} width="6" height="6" fill="#7381d2" />
      )
    )}
    <circle cx="460" cy="259" r="3" fill="none" stroke="#545db8" strokeWidth="1.300" />
    <path d="M460 253v4M460 261v4M454 259h4M462 259h4" stroke="#545db8" />
  </svg>
);

const Twisty = ({ open }: { open?: boolean }) => <Twirl $dir={open ? "down" : "right"} />;

const GroupRow = ({ row }: { row: (typeof groups)[number] }) => (
  <Row>
    <RowSwitches>{row.eye && <EyeBox aria-label="表示"><Icon name="eye" size={13} /></EyeBox>}</RowSwitches>
    <RowName $depth={row.depth}>
      <Twisty open={row.open} />
      {row.name}
    </RowName>
    {row.kind === "add" && <AddCell>追加:<Icon name="play" size={12} /></AddCell>}
    {row.kind === "mode" && <RowValue><Select label="モード" value="通常" w={140} h={16} live /></RowValue>}
    {row.kind === "dir" && (
      <RowValue>
        <DirButton $on aria-label="正方向"><Icon name="dirLeft" size={12} /></DirButton>
        <DirButton aria-label="逆方向"><Icon name="dirRight" size={12} /></DirButton>
      </RowValue>
    )}
  </Row>
);

const PropRow = ({ row }: { row: (typeof props)[number] }) => (
  <Row>
    <span />
    <RowName $depth={4}>
      <KeyDot />
      <StopwatchButton aria-label="ストップウォッチ"><Icon name="watch" size={12} /></StopwatchButton>
      {row.name}
    </RowName>
    <RowValue>
      {row.linked && <EyeBox aria-label="縦横比を固定"><Icon name="link" size={13} /></EyeBox>}
      <span>
        <Dotted>{row.values[0]}</Dotted>
        {row.values[1] && (row.values[0] === "0x" ? " " : ",")}
        {row.values[1] && <Dotted>{row.values[1]}</Dotted>}
        {row.unit}
      </span>
    </RowValue>
  </Row>
);

const Timeline = () => (
  <Panel>
    <TabStrip>
      <Tab $w={91}>レンダーキュー</Tab>
      <Tab $w={62}><Swatch $color={c.tan} />test</Tab>
      <Tab $active $w={62}><Grip /><Swatch $color={c.tan} />test ×</Tab>
      <PanelMenu />
    </TabStrip>
    <TimelineBody>
      <Outline>
        <OutlineTop>
          <TimeCode><strong>0;00;00;00</strong><span>00000 (29.97 fps)</span></TimeCode>
          <SearchBox $w={176} $h={18}><Icon name="search" size={12} /><input aria-label="レイヤーを検索" /></SearchBox>
          <SwitchIcons>
            <SwitchButton aria-label="フローチャート"><Icon name="flow" size={21} h={18} /></SwitchButton>
            <SwitchButton $ml $pressed aria-label="ライブアップデート"><Icon name="comp" size={19} /></SwitchButton>
            <SwitchButton aria-label="ドラフト 3D"><Icon name="cube" size={20} /></SwitchButton>
            <SwitchButton $ml aria-label="シャイ"><Icon name="shy" size={19} /></SwitchButton>
            <SwitchButton aria-label="フレームブレンド"><Icon name="film" size={20} h={18} /></SwitchButton>
            <SwitchButton aria-label="モーションブラー"><Icon name="blur" size={18} /></SwitchButton>
            <SwitchButton $ml aria-label="ブレインストーム"><Icon name="brain" size={20} h={18} /></SwitchButton>
            <SwitchButton aria-label="自動キーフレーム"><Icon name="watch" size={18} /></SwitchButton>
            <SwitchButton aria-label="グラフエディター"><Icon name="graph" size={20} h={17} /></SwitchButton>
          </SwitchIcons>
        </OutlineTop>
        <ColumnHeads>
          <Head $line $pad={6}>
            <Icon name="eye" size={13} /><Icon name="speaker" size={13} /><Icon name="dot" size={13} /><Icon name="locked" size={12} />
          </Head>
          <Head $line $pad={13}><Icon name="tag" size={15} h={13} /></Head>
          <Head $line>#</Head>
          <Head $line>ソース名</Head>
          <Head>モード</Head>
          <Head>T</Head>
          <Head $line>トラックマット</Head>
          <Head>親</Head>
        </ColumnHeads>
        <Row $layer>
          <RowSwitches>
            <EyeBox aria-label="表示"><Icon name="eye" size={13} /></EyeBox>
            <EmptyBox $gap aria-label="ソロ" /><EmptyBox aria-label="ロック" />
          </RowSwitches>
          <RowName $depth={0}>
            <LayerTwirl $dir="down" />
            <Swatch $color={c.blue} $w={13} $h={13} />
            <LayerNumber>1</LayerNumber>
            <Icon name="star" size={12} />
            <LayerName>シェイプレイヤー 1</LayerName>
          </RowName>
          <LayerValue>
            <Select label="モード" value="通常" w={69} h={16} live />
            <EmptyBox aria-label="透明部分を保持" />
            <ParentPick>
              <Icon name="swirl" size={12} />
              <Select label="親" value="なし" w={89} h={16} live />
            </ParentPick>
          </LayerValue>
        </Row>
        {groups.map((row) => <GroupRow key={row.name} row={row} />)}
        {props.map((row) => <PropRow key={row.name} row={row} />)}
      </Outline>
      <TimeArea>
        <Navigator><Handle /><Handle /></Navigator>
        <Ruler>
          {ticks.map((t, i) => <Tick key={i} $major={i === 6}>{t}</Tick>)}
          <LastTick $major>02:00f</LastTick>
        </Ruler>
        <WorkArea><Handle /><Handle /></WorkArea>
        <CacheLine />
        <Clip />
        <Playhead>
          <Svg w={14} h={16} box="0 0 14 16">
            <path d="M1.500 2.500 4 1h7l2 1.500V8l-5.500 7.500L1.500 8z" fill="#d9a924" stroke="#7a5c10" strokeWidth=".7" />
            <path d="M5 4v4M7.300 4v4M9.600 4v4" stroke="#5d450b" />
          </Svg>
        </Playhead>
        {[...groups, ...props].map((row) => (
          <Track key={row.name}>
            <InPoint>
              <Svg w={9} h={13} box="0 0 9 13">
                <path d="M1 .5h2.500v11H1M8 .5H5.500v11H8" fill="none" stroke="#ecdcdc" />
                <path d="M4.500 0v13" stroke="#b8252a" />
              </Svg>
            </InPoint>
          </Track>
        ))}
      </TimeArea>
      <SideRail>
        <RailTop>
          <Svg w={12} h={15} box="0 0 12 15"><path d="M1 1h10v8l-5 5-5-5z" fill="#a5a5a5" stroke="#d0d0d0" /></Svg>
          <Icon name="layers" size={14} />
        </RailTop>
        <RailTrack><Tri $dir="up" /><RailThumb /><Tri $dir="down" $end /></RailTrack>
      </SideRail>
    </TimelineBody>
    <TimelineFoot>
      <FootTools>
        <FootButton aria-label="レイヤースイッチ"><Icon name="collapse" size={13} /></FootButton>
        <FootButton $on aria-label="転送制御"><Icon name="circles" size={13} /></FootButton>
        <FootButton aria-label="イン・アウト"><Icon name="braces" size={13} /></FootButton>
      </FootTools>
      <ModeToggle>スイッチ / モード</ModeToggle>
      <Svg w={12} h={8} box="0 0 12 8"><path d="M1 7.500 4 3l1.500 2L7 3l4 4.500z" fill="none" stroke="#bbb" /></Svg>
      <ZoomSlider type="range" min="0" max="100" defaultValue="0" aria-label="ズーム" />
      <Svg w={18} h={9} box="0 0 18 9"><path d="M0 9 5 3l2.500 3L11 0l7 9z" fill="#b0b0b0" /></Svg>
      <HScroll><Tri $dir="left" /><Tri $dir="right" /></HScroll>
    </TimelineFoot>
  </Panel>
);

const AlignButton = ({ d, label }: { d: string; label: string }) => (
  <IconButton $w={22} aria-label={label}>
    <Svg w={17} h={15}><path d={d} fill="#606060" stroke="#7c7c7c" strokeWidth="1.400" /></Svg>
  </IconButton>
);

const Windows = () => <Svg w={20} h={19}><path d="M0 3 8.500 1.700v8H0zM9.500 1.500 20 0v9.700H9.500zM0 10.500h8.500v8L0 17.200zM9.500 10.500H20V20L9.500 18.600z" /></Svg>;

export default function App() {
  return (
    <Page>
      <Global />
      <TitleBar>
        <AppBadge $size={19} $color="#9a85e6" $bg="#2a1458">Ae</AppBadge>
        Adobe After Effects - key point 1-2.aep *
        <WindowButtons>
          <WindowButton aria-label="最小化"><Svg w={12} h={12} box="0 0 12 12">{ln("M0 5.500h12", 1)}</Svg></WindowButton>
          <WindowButton aria-label="元に戻す"><Svg w={13} h={13} box="0 0 13 13">{ln("M.5 2.500h9v10h-9zM3 2.500v-2h9.500v10h-3", 1)}</Svg></WindowButton>
          <WindowButton aria-label="閉じる"><Svg w={13} h={13} box="0 0 13 13">{ln("m.5.5 12 12M12.500.5l-12 12", 1)}</Svg></WindowButton>
        </WindowButtons>
      </TitleBar>
      <MenuBar>{menus.map((m) => <MenuButton key={m}>{m}</MenuButton>)}</MenuBar>

      <Toolbar>
        <ToolGrip><Grip /></ToolGrip>
        {toolGroups.map((group, i) => (
          <ToolGroup key={i} $last={i === 5}>
            {group.map((name) => (
              <IconButton key={name} $w={25} $pressed={name === "hexagon"} aria-label={name}><Icon name={name} size={17} /></IconButton>
            ))}
          </ToolGroup>
        ))}
        <ToolOptions>
          <IconButton $w={19} $pressed aria-label="シェイプ"><Icon name="star" size={14} /></IconButton>
          <IconButton $w={24} aria-label="マスク"><Icon name="mask" size={15} /></IconButton>
          <ToolDivider />
          <Option $w={66}><Dotted>塗り</Dotted>:<Swatch $color="#a2a2a2" $w={20} $h={14} /></Option>
          <Option $w={57}><Dotted>線</Dotted>:<StrokeSwatch /></Option>
          <Option $w={49}><span><Dotted>5</Dotted> px</span></Option>
          <Option $w={60}>追加 :<Icon name="play" size={12} /></Option>
          <Workspace>ワークスペース :<Select label="ワークスペース" value="標準" w={138} h={18} /></Workspace>
          <SearchBox $w={192} $h={18}><Icon name="search" size={13} /><input aria-label="ヘルプを検索" placeholder="ヘルプを検索" /></SearchBox>
        </ToolOptions>
      </Toolbar>

      <Upper>
        <Column>
          <DockBar $left />
          <EffectPanel>
            <TabStrip>
              <ClippedTab $w={56}>ロジェクト</ClippedTab>
              <Tab $active $w={266}>
                <Grip /><span /><Swatch $color={c.blue} /><Icon name="lock" size={12} />
                <Select label="エフェクトコントロール" value="エフェクトコントロール : シェイプレイヤー 1" w={224} small />
              </Tab>
              <PanelMenu />
            </TabStrip>
            <EffectTitle>test • シェイプレイヤー 1</EffectTitle>
            <EffectBody><ScrollTrack><Tri $dir="up" /><Tri $dir="down" $end /></ScrollTrack></EffectBody>
          </EffectPanel>
        </Column>

        <Panel>
          <TabStrip>
            <Tab $active $w={181}>
              <Grip /><Swatch $color={c.tan} /><Icon name="lock" size={12} />
              <Select label="コンポジション" value="コンポジション: test" w={126} />×
            </Tab>
            <Tab $w={149}>レイヤー: (なし)</Tab>
            <PanelMenu />
          </TabStrip>
          <Crumbs><Crumb>test</Crumb></Crumbs>
          <Viewer><Composition /></Viewer>
          <ViewerBar>
            <IconButton $w={15} aria-label="常にプレビュー"><Icon name="grid" size={13} /></IconButton>
            <Select label="拡大率" value="(47.9 ..." w={68} />
            <IconButton aria-label="グリッド"><Icon name="safe" size={15} /></IconButton>
            <IconButton $w={20} $pressed aria-label="目標範囲"><Icon name="roi" size={15} /></IconButton>
            <TimeBox>0;00;00;00</TimeBox>
            <IconButton $w={20} aria-label="スナップショット"><Icon name="photo" size={13} /></IconButton>
            <IconButton $w={22} aria-label="スナップショットを表示"><Icon name="person" size={14} /></IconButton>
            <IconButton $w={18} aria-label="チャンネル"><Icon name="rgb" size={14} /></IconButton>
            <Select label="解像度" value="(1/2 画質 )" w={85} />
            <IconButton $w={20} aria-label="透明グリッド"><Icon name="res" size={13} /></IconButton>
            <IconButton $w={20} aria-label="マスク表示"><Icon name="checker" size={14} /></IconButton>
            <Select label="3D ビュー" value="アクティブカメラ" w={103} />
            <span />
            <Select label="レイアウト" value="1 画面" w={68} />
            <IconButton $w={22} aria-label="ピクセル縦横比"><Icon name="ratio" size={13} /></IconButton>
            <IconButton $w={18} $pressed aria-label="高速プレビュー"><Icon name="bolt" size={14} /></IconButton>
            <IconButton $w={22} aria-label="タイムライン"><Icon name="tline" size={14} /></IconButton>
            <IconButton $w={18} aria-label="フローチャート"><Icon name="tree" size={14} /></IconButton>
            <StripDivider />
            <IconButton $w={20} aria-label="露光量をリセット"><Icon name="aperture" size={14} /></IconButton>
            <Dotted>+0.0</Dotted>
          </ViewerBar>
        </Panel>

        <Column>
          <InfoPanel>
            <TabStrip>
              <Tab $active $w={50}><Grip />情報 ×</Tab>
              <Tab $w={71}>オーディオ</Tab>
              <PanelMenu />
            </TabStrip>
            <InfoGrid>
              <InfoSwatch $color="#000" $w={20} $h={20} />
              <Channels><dt>R :</dt><dd>0</dd><dt>G :</dt><dd>0</dd><dt>B :</dt><dd>0</dd><dt>A :</dt><dd>255</dd></Channels>
              <Plus>+</Plus>
              <CursorPos><dt>X :</dt><dd>33</dd><dt>Y :</dt><dd>937</dd></CursorPos>
            </InfoGrid>
            <InfoNotes>シェイプレイヤー 1<br />デュレーション : 0;00;02;00</InfoNotes>
          </InfoPanel>
          <PreviewPanel>
            <TabStrip>
              <Tab $active $w={74}><Grip />プレビュー ×</Tab>
              <PanelMenu />
            </TabStrip>
            <PlayRow>
              {transport.map(([name, label, w]) => (
                <IconButton key={name} $w={w} aria-label={label}><Icon name={name} size={13} /></IconButton>
              ))}
            </PlayRow>
            <PreviewGrid>
              <Wide><Select label="プレビューオプション" value="RAM プレビューオプション" w={170} /></Wide>
              <span>フレーム</span><span>スキップ</span><span>解像度</span>
              <Combo><input aria-label="フレーム" defaultValue="(29.97)" /><Tri $dir="down" /></Combo>
              <Combo><input aria-label="スキップ" defaultValue="0" /><Tri $dir="down" /></Combo>
              <Select label="解像度" value="自動" w={79} />
              <CheckRow>
                <Check><input type="checkbox" />現在の時間から</Check>
                <Check><input type="checkbox" />フルスクリーン</Check>
              </CheckRow>
            </PreviewGrid>
          </PreviewPanel>
          <DockBar />
          <BrushPanel>
            <TabStrip>
              <Tab $w={123}>エフェクト＆プリセット</Tab>
              <Tab $active $w={44}><Grip />ブラシ</Tab>
              <PanelMenu />
            </TabStrip>
            <BrushList>
              <BrushGrid>
                {brushes.map(([size, d, soft], i) => (
                  <BrushCell key={i} $on={i === 8}><BrushDot $d={d} $soft={soft} />{size}</BrushCell>
                ))}
              </BrushGrid>
              <BrushScroll><Tri $dir="up" /><BrushThumb /><Tri $dir="down" $end /></BrushScroll>
            </BrushList>
            <BrushSettings>
              <Fields>
                <Field><span>直径</span><span>:</span><span><Dotted>13</Dotted> px</span></Field>
                <Field><span>角度</span><span>:</span><span><Dotted>0</Dotted> °</span></Field>
                <Field><span>真円率</span><span>:</span><span><Dotted>100</Dotted> %</span></Field>
                <Field><span>硬さ</span><span>:</span><span><Dotted>0</Dotted> %</span></Field>
                <Field><Check><input type="checkbox" defaultChecked />間隔</Check><span>:</span><span><Dotted>25</Dotted> %</span></Field>
              </Fields>
              <div>
                <BrushPreview><BrushDot $d={12} $soft /></BrushPreview>
                <BrushActions>
                  <IconButton $w={24} aria-label="新規ブラシ"><Icon name="note" size={12} /></IconButton>
                  <IconButton $w={24} aria-label="削除"><Icon name="trash" size={14} /></IconButton>
                </BrushActions>
              </div>
            </BrushSettings>
            <SectionLabel>ブラシダイナミックス</SectionLabel>
            <SelectField><span>サイズ</span><span>:</span><Select label="サイズ" value="筆圧" /></SelectField>
            <Field><span>最小サイズ</span><span>:</span><span><Dotted>1</Dotted> %</span></Field>
            <SelectField><span>角度</span><span>:</span><Select label="角度" value="オフ" /></SelectField>
            <SelectField><span>真円率</span><span>:</span><Select label="真円率" value="オフ" /></SelectField>
          </BrushPanel>
        </Column>
      </Upper>

      <Lower>
        <Timeline />
        <Panel>
          <TabStrip>
            <Tab $active $w={50}><Grip />整列 ×</Tab>
            <Tab $w={62}>ペイント</Tab>
            <PanelMenu />
          </TabStrip>
          <AlignTop>レイヤーを整列 :<Select label="レイヤーを整列" value="コンポジション" w={109} /></AlignTop>
          <AlignRow>{alignIcons.map((d) => <AlignButton key={d} d={d} label="整列" />)}</AlignRow>
          <AlignRule />
          <AlignLabel>レイヤーを配置 :</AlignLabel>
          <AlignRow>{spreadIcons.map((d) => <AlignButton key={d} d={d} label="配置" />)}</AlignRow>
        </Panel>
      </Lower>

      <Taskbar>
        <SystemButtons>
          <TaskButton $w={45} aria-label="スタート"><Windows /></TaskButton>
          <TaskButton $w={45} aria-label="検索"><Svg w={21} h={21}><circle cx="12.500" cy="7" r="6" fill="none" stroke="#fff" strokeWidth="1.500" />{ln("M8.500 11.500 1 19.500", 1.600)}</Svg></TaskButton>
          <TaskButton $w={45} aria-label="タスクビュー"><Svg w={24} h={20} box="0 0 26 20">{ln("M6 1.500h14v17H6zM3.500 4H1v12h2.500M22.500 4H25v12h-2.500", 1.500)}</Svg></TaskButton>
        </SystemButtons>
        <TaskButton $run aria-label="エクスプローラー">
          <Svg w={19} h={17}><path d="M0 1h7l2 3h11v14H0z" fill="#e9c05a" /><path d="M0 6h20v10H0z" fill="#fbe39a" /><path d="M3 11h14v8h-4v-4H7v4H3z" fill="#4aa9d8" /></Svg>
        </TaskButton>
        <TaskButton aria-label="メディアプレーヤー">
          <Svg w={18} h={18}><path d="M5 1h14v16H5z" fill="#4a7ea8" /><path d="M1 2h14v16H1z" fill="#8fb8d4" /><circle cx="9" cy="10" r="6" fill="#e87f22" /><path d="M7 6.500v7l5.500-3.500z" fill="#fff" /></Svg>
        </TaskButton>
        <TaskButton aria-label="iTunes">
          <Svg w={19} h={19}><circle cx="10" cy="10" r="9.200" fill="#f7f7fb" stroke="#c98fd8" /><path d="M7.500 5.500 14 4v9.200a2 2 0 1 1-1.300-1.800V6.800L8.800 7.700v6.800a2 2 0 1 1-1.300-1.800z" fill="#e0447c" /></Svg>
        </TaskButton>
        <TaskButton aria-label="Edge">
          <Svg w={17} h={18}><path d="M1 9C2 3 6 0 10.500 0 16 0 19.500 4 19.500 9v3H7c.3 3 2.500 4.300 5.500 4.300 2.200 0 4-.5 5.500-1.500v4c-2 1-4 1.400-6.500 1.400C6 20.200 2.500 17 2.500 12.500 2.500 9 4.500 6.300 7.500 5 4.500 5.200 2.500 6.500 1 9zm6.300-.7h6.500c0-2-1-3.600-3-3.600S7.600 6 7.300 8.300z" fill="#1b7fd4" /></Svg>
        </TaskButton>
        <TaskButton aria-label="Firefox">
          <Svg w={19} h={19}><circle cx="10" cy="10" r="9" fill="#e2601c" /><circle cx="11" cy="7.500" r="6" fill="#3a8fce" /><path d="M2 4c2 2 3 1.500 5 3 1 2 0 3 2 4.500 3 1.500 5-.5 6 0-1 4-5 5-8 4C3 14 1 9 2 4z" fill="#f48b21" /><path d="M17 5c3 5 1 11-5 13.500 4-3 6-8 5-13.500z" fill="#f9c53a" /></Svg>
        </TaskButton>
        <TaskButton $run aria-label="Chrome">
          <Svg w={19} h={19}><circle cx="10" cy="10" r="9.500" fill="#4ba04f" /><path d="M10 .5A9.500 9.500 0 0 1 18.500 5.500H10a4.500 4.500 0 0 0-4.200 3L2 4.800A9.500 9.500 0 0 1 10 .5z" fill="#da4437" /><path d="M18.500 5.500a9.500 9.500 0 0 1-9 14l4.200-7a4.500 4.500 0 0 0 0-5.500z" fill="#fbcb3d" /><circle cx="10" cy="10" r="4.600" fill="#fff" /><circle cx="10" cy="10" r="3.600" fill="#4a82ea" /></Svg>
        </TaskButton>
        <TaskButton $run aria-label="Premiere"><AppBadge $size={18} $color="#c36be8" $bg="#2a0436">Pr</AppBadge></TaskButton>
        <TaskButton $run aria-label="Word">
          <Svg w={19} h={19}><path d="M10 2h9v16h-9z" fill="#fff" stroke="#2b5797" /><path d="M12 5.500h5.500M12 8.500h5.500M12 11.500h5.500M12 14.500h5.500" stroke="#2b5797" strokeWidth="1.300" /><path d="M0 2.500 12 .5v19L0 17.500z" fill="#2b5797" /><path d="m2.500 6.500 1.500 7L6 7l2 6.500 1.500-7" fill="none" stroke="#fff" strokeWidth="1.400" /></Svg>
        </TaskButton>
        <TaskButton $run $on aria-label="After Effects"><AppBadge $size={18} $color="#a08af0" $bg="#1f0f4a">Ae</AppBadge></TaskButton>
        <TaskButton $run aria-label="ペイント">
          <Svg w={20} h={20}><path d="M9 4c6-1 9 3 8 7-.6 2.600-3 2-4 3s.5 3-2 4.500C6 20 1 17 1 12c0-4 3-7.300 8-8z" fill="#d5e4ee" /><circle cx="5" cy="10" r="1.800" fill="#3f8ed0" /><circle cx="9" cy="7" r="1.600" fill="#d64a3a" /><circle cx="13" cy="8" r="1.500" fill="#efb632" /><circle cx="6" cy="14.500" r="1.700" fill="#4fa64a" /><path d="M16 0 19 2l-6 14-2 2v-3z" fill="#c78f4d" /></Svg>
        </TaskButton>
        <Tray>
          <TrayItem $w={30} aria-label="電源"><Svg w={20} h={14} box="0 0 20 14"><path d="M5 3h13v3h1.500v4H18v3H5zM1 1v4l1.500 1v5H5" fill="none" stroke="#fff" strokeWidth="1.200" /><path d="M6.500 4.500h10v7h-10zM0 1h5v4H0z" /></Svg></TrayItem>
          <TrayItem $w={30} aria-label="OneDrive"><Svg w={20} h={18}><path d="M2 14C-1 11 2 7 4 8c1-5 8-6 10-1 4-1 6 3 4 6z" /><circle cx="14" cy="13.500" r="5.800" fill="#8b8b8b" /><path d="M12 10.500v6M16 10.500v6" stroke="#fff" strokeWidth="1.500" /></Svg></TrayItem>
          <TrayItem $w={31} aria-label="ネットワーク"><Svg w={17} h={16}>{ln("M1 17C1 8 8 1.500 18 1.500M5 18C5 11 11 6 18 6M9.500 18c0-4 4-7.500 8.500-7.500", 1.300)}<circle cx="16" cy="16.500" r="2.500" /></Svg></TrayItem>
          <TrayItem $w={28} aria-label="音量"><Svg w={20} h={16} box="0 0 22 20">{ln("M1 6.500h3.500L9 3v14l-4.500-3.500H1zM12 7q2.500 3 0 6M15 5q4.500 5 0 10M18 3q6 7 0 14", 1.300)}</Svg></TrayItem>
          <Ime $w={31}>A</Ime>
          <TrayItem $w={40} aria-label="IME"><Svg w={18} h={18}><path d="M0 0h20v20H0z" /><circle cx="10" cy="10" r="8" fill="#111" />{ln("M12 4v8c0 3-5 3-5 0", 2)}</Svg></TrayItem>
          <TrayItem $w={58}>21:55</TrayItem>
          <TrayItem $w={40} aria-label="通知"><Svg w={20} h={20}><path d="M0 0h20v16h-7l-3 4-3-4H0z" /><path d="M4 4.500h12M4 8h12M4 11.500h8" stroke="#000" strokeWidth="1.200" /></Svg></TrayItem>
        </Tray>
      </Taskbar>

      <Dialog role="dialog" aria-labelledby="dialog-title">
        <DialogTitle id="dialog-title">After Effects</DialogTitle>
        <DialogBody>
          <Svg w={30} h={30} box="0 0 32 32">
            <circle cx="16" cy="16" r="15.500" fill="#a9141a" />
            <circle cx="16" cy="15" r="14" fill="#cf1a22" />
            <path d="M4 11a13 11 0 0 1 24 0c-6-3-18-3-24 0z" fill="#e25458" />
            <path d="m10 9 12 13M22 9 10 22" stroke="#fff" strokeWidth="4" />
          </Svg>
          <div>
            <p>AfterEffects エラー : 時間データを空間データにペーストできません。</p>
            <p>( 26 、269 )</p>
          </div>
        </DialogBody>
        <DialogFoot><OkButton>OK</OkButton></DialogFoot>
      </Dialog>
    </Page>
  );
}
